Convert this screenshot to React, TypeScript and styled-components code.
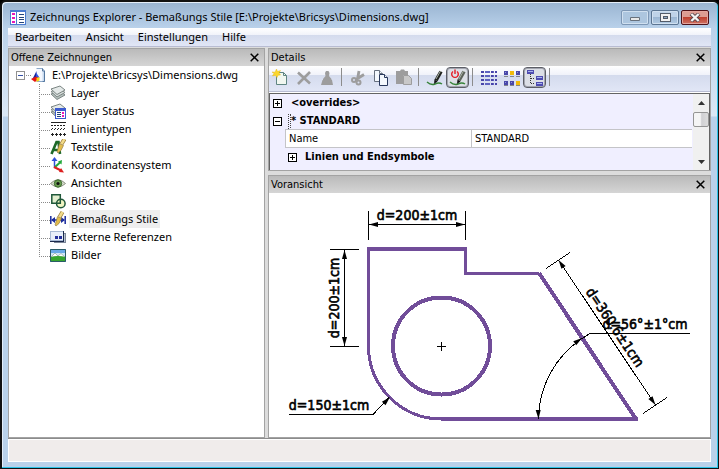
import React from "react";
import styled, { createGlobalStyle, css } from "styled-components";

const uiFont = `"Noto Sans", "Open Sans", sans-serif`;
const panelFont = `"DejaVu Sans Condensed", "DejaVu Sans", sans-serif`;

const GlobalStyle = createGlobalStyle`
  *, *::before, *::after { box-sizing: border-box; }
  body { margin: 0; background: #000; color: #000; font: 11px/18px ${uiFont}; }
  button, input { font: inherit; color: inherit; }
`;

const Window = styled.div`
  height: 100vh;
  min-height: 360px;
  display: flex;
  flex-direction: column;
  padding: 0 7px 6px 6px;
  border: 1px solid #111;
  border-width: 2px 1px 1px 2px;
  border-radius: 6px 6px 0 0;
  box-shadow: inset -1px -1px #2cc3e8, inset 1px 1px #e4eef9;
  background: linear-gradient(#99b4d1 0, #b9d1ea 26px, #dbe8f5 114px, #b9d1ea 115px);
`;

const TitleBar = styled.header`
  flex: 0 0 26px;
  display: flex;
  align-items: center;
  gap: 4px;
  padding: 4px 2px 0 2px;
`;

const Title = styled.h1`
  flex: 1;
  margin: 0;
  overflow: hidden;
  white-space: nowrap;
  font: 11px/18px ${uiFont};
`;

const Captions = styled.div`
  display: flex;
  gap: 2px;
`;

const CaptionButton = styled.button<{ $close?: boolean; $dim?: boolean }>`
  width: 28px;
  height: 15px;
  padding: 0;
  display: grid;
  place-items: center;
  border: 1px solid ${(p) => (p.$close ? "#4e1218" : p.$dim ? "#7d97b5" : "#5b7592")};
  border-radius: 2px;
  box-shadow: inset 0 0 0 1px ${(p) => (p.$close ? "#e3a49c" : "#d0e0f0")};
  background: ${(p) =>
    p.$close
      ? "linear-gradient(#dc9c92 45%, #bf4130 50%, #ce7263)"
      : p.$dim
        ? "#adc6df"
        : "linear-gradient(#bfd3e8 45%, #9cb7d3 50%, #b3cbe3)"};
`;

const MenuBar = styled.nav`
  flex: 0 0 19px;
  display: flex;
  gap: 14px;
  padding: 0 7px;
  border-bottom: 1px solid #b8bcd2;
  background: linear-gradient(#fff, #f1f3fa 38%, #d4dbed 40%, #e1e6f6);
`;

const MenuItem = styled.button`
  padding: 0;
  border: 0;
  background: none;
  line-height: 18px;
`;

const Workspace = styled.main`
  flex: 1;
  min-height: 0;
  display: grid;
  grid-template-columns: 257px minmax(0, 1fr);
  gap: 3px;
  padding-top: 1px;
  background: #dcdcdc;
  border-bottom: 1px solid #8c8c8c;
`;

const RightColumn = styled.div`
  display: flex;
  flex-direction: column;
  gap: 4px;
  min-height: 0;
`;

const Panel = styled.section<{ $grow?: boolean }>`
  display: flex;
  flex-direction: column;
  min-height: 0;
  border: 1px solid #a3a3a3;
  background: #fff;
  ${(p) => p.$grow && css`flex: 1;`}
`;

const PanelHeader = styled.div`
  flex: 0 0 17px;
  display: flex;
  align-items: center;
  justify-content: space-between;
  padding: 0 4px 0 2px;
  background: linear-gradient(#bababa, #d5d5d5);
`;

const PanelTitle = styled.h2`
  margin: 0;
  font: 11px/16px ${panelFont};
`;

const CloseButton = styled.button`
  width: 11px;
  height: 13px;
  padding: 0;
  display: grid;
  place-items: center;
  border: 0;
  background: none;
`;

const Tree = styled.ul`
  margin: 0;
  padding: 0 0 0 7px;
  list-style: none;
`;

const Branch = styled.ul`
  margin: 0 0 0 23px;
  padding: 0;
  list-style: none;
`;

const RootRow = styled.div`
  display: flex;
  align-items: center;
  height: 18px;
`;

const TreeLabel = styled.button<{ $selected?: boolean }>`
  height: 18px;
  margin-left: 3px;
  padding: 0 2px;
  border: 0;
  white-space: nowrap;
  background: ${(p) => (p.$selected ? "#eeeeee" : "none")};
`;

const Leaf = styled.li`
  display: flex;
  align-items: center;
  height: 18px;
  padding-left: 11px;
  background:
    repeating-linear-gradient(#8a8a8a 0 1px, transparent 1px 2px) 0 0 / 1px 100% no-repeat,
    repeating-linear-gradient(90deg, #8a8a8a 0 1px, transparent 1px 2px) 0 10px / 11px 1px no-repeat;

  &:last-child {
    background:
      repeating-linear-gradient(#8a8a8a 0 1px, transparent 1px 2px) 0 0 / 1px 10px no-repeat,
      repeating-linear-gradient(90deg, #8a8a8a 0 1px, transparent 1px 2px) 0 10px / 11px 1px no-repeat;
  }
`;

const Expander = styled.button<{ $soft?: boolean }>`
  flex: none;
  width: 9px;
  height: 9px;
  padding: 0;
  display: grid;
  place-items: center;
  border: 1px solid ${(p) => (p.$soft ? "#919191" : "#000")};
  background: #fff;
`;

const Dots = styled.span`
  width: 6px;
  height: 1px;
  background: repeating-linear-gradient(90deg, transparent 0 1px, #8a8a8a 1px 2px);
`;

const Icon = styled.svg`
  display: block;
  flex: none;
`;

const Toolbar = styled.div`
  flex: 0 0 26px;
  display: flex;
  align-items: flex-start;
  padding-top: 1px;
  border-bottom: 1px solid #b8bcd2;
  background: linear-gradient(#fff, #f1f3fa 34%, #d4dbed 36%, #e1e6f6);
`;

const ToolButton = styled.button<{ $on?: boolean }>`
  width: 23px;
  height: 21px;
  padding: 0;
  display: grid;
  place-items: center;
  border: 1px solid ${(p) => (p.$on ? "#5c5e66" : "transparent")};
  border-radius: 4px;
  box-shadow: ${(p) => (p.$on ? "inset 0 0 0 1px #a3a6b0" : "none")};
  background: ${(p) => (p.$on ? "#dcdfe6" : "none")};
`;

const Separator = styled.span`
  width: 1px;
  height: 18px;
  margin: 1px 4px 0 3px;
  background: #8c8c8c;
`;

const Properties = styled.div`
  display: flex;
  margin-top: 1px;
  height: 77px;
  border: 1px solid #646464;
  border-width: 1px 1px 0 1px;
  background: #f0efff;
  font: 11px/18px ${panelFont};
`;

const PropertyRows = styled.div`
  flex: 1;
  min-width: 0;
`;

const GroupRow = styled.div<{ $nested?: boolean }>`
  display: flex;
  align-items: center;
  height: 18px;
  padding-left: ${(p) => (p.$nested ? 18 : 3)}px;
  font-weight: bold;
`;

const GroupName = styled.span<{ $gap: number }>`
  display: flex;
  align-items: center;
  margin-left: ${(p) => p.$gap}px;
`;

const FieldRow = styled.label`
  display: grid;
  grid-template-columns: 46fr 55fr;
  height: 19px;
  margin: -1px 1px 0 15px;
  border: 1px solid #c4c4c8;
  border-right: 0;
  background: #fff;
  line-height: 17px;

  span { padding-left: 3px; }
  input {
    min-width: 0;
    padding: 0 0 0 3px;
    border: 0;
    border-left: 1px solid #c4c4c8;
    background: none;
    outline: 0;
  }
`;

const ScrollBar = styled.div`
  width: 16px;
  display: grid;
  grid-template-rows: 18px 15px 1fr 17px;
  background: #f0f0f0;
`;

const ScrollButton = styled.button`
  padding: 0;
  display: grid;
  place-items: center;
  border: 0;
  background: none;
`;

const Thumb = styled.div`
  border: 1px solid #959595;
  border-radius: 2px;
  background: linear-gradient(90deg, #f5f5f5 45%, #d0d0d3 55%, #dcdcdc);
`;

const Canvas = styled.svg`
  flex: 1;
  min-height: 0;
  width: 100%;
  display: block;
  text {
    font: 14px ${panelFont};
    fill: #000;
    stroke: #000;
    stroke-width: 0.6px;
    text-anchor: middle;
  }
`;

const StatusBar = styled.footer`
  flex: 0 0 23px;
  border: 1px solid #fff;
  background: #f0eceb;
`;

const CrossGlyph = () => (
  <Icon width="9" height="9" viewBox="0 0 9 9">
    <path d="M.7.7l7.6 7.6M8.3.7L.7 8.3" stroke="#000" strokeWidth="1.5" />
  </Icon>
);

const Sign = ({ plus, color = "#000" }: { plus?: boolean; color?: string }) => (
  <Icon width="7" height="7" shapeRendering="crispEdges">
    <path d={plus ? "M1 3.500h5M3.500 1v5" : "M1 3.500h5"} stroke={color} />
  </Icon>
);

const AppIcon = () => (
  <Icon width="16" height="15" shapeRendering="crispEdges">
    <path fill="#4a7bd0" d="M0 0h16v15H0z" />
    <path fill="#fff" d="M1 2h5v12H1zM7 2h8v12H7z" />
    <path fill="#e818b8" d="M2 3h3v2H2zM2 7h3v2H2zM2 11h3v2H2z" />
    <path fill="#24457c" d="M9 4h5v1H9zM9 7h5v1H9zM9 9h5v1H9zM9 12h5v1H9z" />
  </Icon>
);

const Drawing = () => (
  <Icon width="16" height="16">
    <path d="M5.500 1.500h6l2 2.500v10.500h-8" fill="#f4f8ff" stroke="#8ca8c8" />
    <path d="M11.500 1.500V4h2v10.500h-2" fill="#c8daf0" stroke="#54779f" />
    <path d="M5.500 4L1.500 12h4z" fill="#16259f" />
    <path d="M5 5.500v6l3.500-1z" fill="#3155df" />
    <path d="M0 12l5-2.500 3 2-4 3.500z" fill="#e51414" />
    <path d="M5.500 11l3-1v3.500l-3 1.500z" fill="#f5d517" />
  </Icon>
);

const Sheets = () => (
  <g stroke="#7b8583" strokeWidth="1">
    <path d="M1 9l9-3 5 4-8 4.500z" fill="#b7c2bf" />
    <path d="M1 6.500l9-3 5 4-8 4.500z" fill="#d6dddb" />
    <path d="M1 4l9-3 5 4-8 4.500z" fill="#e4e9e8" />
  </g>
);

const Layers = () => <Icon width="16" height="16"><Sheets /></Icon>;

const LayerState = () => (
  <Icon width="16" height="16">
    <Sheets />
    <g shapeRendering="crispEdges">
      <path fill="#3c5bd0" d="M5 5h11v11H5z" />
      <path fill="#fff" d="M6 8h9v7H6z" />
      <path fill="#e818b8" d="M12 9h2v2h-2zM12 12h2v2h-2z" />
      <path fill="#24457c" d="M7 9h4v1H7zM7 11h4v1H7zM7 13h4v1H7z" />
    </g>
  </Icon>
);

const LineTypes = () => (
  <Icon width="16" height="16" shapeRendering="crispEdges" stroke="#222">
    <path d="M1 1.500h15" />
    <path d="M1 4.500h15" strokeDasharray="2 1" />
    <path d="M1 8.500h15" strokeDasharray="1 2" />
    <path d="M2 7.500h14" strokeDasharray="1 2" />
    <path d="M1 13.500h3M5 13.500h3M9 13.500h3M13 13.500h3M2.500 12v3M6.500 12v3M10.500 12v3M14.500 12v3" />
  </Icon>
);

const Brush = () => (
  <g>
    <path d="M13.500 1L10.500 6" stroke="#9c7b36" strokeWidth="4" />
    <path d="M13.500 1L10.500 6" stroke="#f2dc8a" strokeWidth="2.500" />
    <path d="M8.500 5.500l4 2-2.500 5-3 2.500-1-1z" fill="#e2bc4c" stroke="#8c7440" strokeWidth=".6" />
  </g>
);

const TextStyle = () => (
  <Icon width="16" height="16">
    <path d="M1.500 15L6.500 3h2l1.500 12M4 11h6" fill="none" stroke="#1d6928" strokeWidth="2.600" />
    <g transform="translate(1 -1)"><Brush /></g>
  </Icon>
);

const Axes = () => (
  <Icon width="16" height="16">
    <path d="M4.500 11V3" stroke="#3050d8" strokeWidth="1.500" />
    <path d="M4.500 0l3 4h-6z" fill="#3050d8" />
    <path d="M5 10l5-4.500" stroke="#22a83a" strokeWidth="2" />
    <path d="M12 3l-.5 4.500-3.500-3z" fill="#22a83a" />
    <path d="M4 10l7 3.500" stroke="#dd2020" strokeWidth="2" />
    <path d="M14 15.500l-5-.5 2-4z" fill="#dd2020" />
  </Icon>
);

const Eye = () => (
  <Icon width="16" height="16">
    <path d="M.5 8.500Q8 1 15.500 8.500 8 15.500.5 8.500z" fill="#d8dfcf" stroke="#8e9285" />
    <circle cx="8" cy="8.500" r="3.700" fill="#6b9c52" stroke="#3a6b2d" />
    <circle cx="8" cy="8.500" r="1.600" fill="#111" />
  </Icon>
);

const Blocks = () => (
  <Icon width="16" height="16" stroke="#20583a" strokeWidth="1.500">
    <path d="M1.800 1.800h8.500v8.500H1.800z" fill="#e3efd0" />
    <circle cx="10.800" cy="10.500" r="4.300" fill="#eff3b8" fillOpacity=".85" />
    <path d="M6 10.300h4.300V6" fill="none" />
  </Icon>
);

const DimStyle = () => (
  <Icon width="16" height="16">
    <path d="M.8 5v8M15.200 5v8M2 9h12" stroke="#1b2c9c" strokeWidth="1.500" />
    <path d="M1 9l4-3v6zM15 9l-4-3v6z" fill="#1b2c9c" />
    <g transform="translate(-1 0)"><Brush /></g>
  </Icon>
);

const Xref = () => (
  <Icon width="16" height="16" shapeRendering="crispEdges">
    <path d="M4.500 4.500h11v9h-11z" fill="#b9c4d4" stroke="#7d8798" />
    <path d="M.5 2.500h13v9H.5z" fill="#e9effa" stroke="#a9bad4" />
    <path d="M0 12.500h13.500V2" fill="none" stroke="#1c2a4c" />
    <path fill="#25309a" d="M5 7h3v3H5zM9 7h3v3H9z" />
  </Icon>
);

const Picture = () => (
  <Icon width="16" height="16">
    <path fill="#69a9e8" d="M0 2h16v13H0z" />
    <path fill="#cfe6f8" d="M1 6h14v4H1z" />
    <path fill="#fff" stroke="#7f9a8a" strokeWidth=".6" d="M1 10l4-4 3 3 3-2.500 4 3.500z" />
    <path fill="#35a52f" d="M1 10q7-2 14 0v4H1z" />
    <path d="M.5 2.500h15v12H.5z" fill="none" stroke="#2b5c67" />
  </Icon>
);

const NewIcon = () => (
  <Icon width="17" height="17">
    <path d="M4.500 3.500h7l3 3v9h-10z" fill="#f1f7f0" stroke="#5f8582" />
    <path d="M11.500 3.500v3h3" fill="none" stroke="#5f8582" />
    <path d="M4.500 0l1 2.500 3-1-1.500 2.500L8.500 6 6 6.200 5 8.500 3.500 6.200.5 7l1.500-2.500L0 3l3 .2z" fill="#fbd72d" stroke="#e6b400" strokeWidth=".4" />
  </Icon>
);

const DeleteIcon = () => (
  <Icon width="16" height="16"><path d="M2 2.500l12 11M14 2L2 14" stroke="#9d9d9d" strokeWidth="2.600" /></Icon>
);

const PurgeIcon = () => (
  <Icon width="16" height="16"><path d="M7 1h2.500l1 2-.5 3 2.500 3v1H4V9l2.500-3L6 3zM3.500 10h9.500l1 5h-12z" fill="#9d9d9d" /></Icon>
);

const CutIcon = () => (
  <Icon width="16" height="16" fill="none" stroke="#9d9d9d" strokeWidth="2">
    <path d="M9 1L7.500 9M14 4.500L6 9.500" strokeWidth="2.800" />
    <circle cx="4" cy="10" r="2" /><circle cx="8.500" cy="12.500" r="2" />
  </Icon>
);

const CopyIcon = () => (
  <Icon width="16" height="16" fill="#f4f8fd" stroke="#67707e">
    <path d="M1.500.5h5l3 3v8h-8z" /><path d="M6.500.5v3h3" />
    <path d="M6.500 4.500h5l3 3v8h-8z" stroke="#28385c" /><path d="M11.500 4.500v3h3" stroke="#28385c" />
  </Icon>
);

const PasteIcon = () => (
  <Icon width="17" height="17">
    <path d="M1 2h4l1-1.500h3L10 2h3v4H8v9H1z" fill="#9d9d9d" />
    <path d="M8.500 6.500h5l3 3v6h-8z" fill="#c8c8c8" stroke="#9d9d9d" />
  </Icon>
);

const PenIcon = ({ power }: { power?: boolean }) => (
  <Icon width="18" height="17">
    <path d="M1 13q4 3.500 8 2 4-2 7 0" fill="none" stroke="#37833a" strokeWidth="1.500" />
    <path d="M10 11.500L15 2.500" stroke={power ? "#5d635b" : "#20231f"} strokeWidth="3.600" />
    <path d="M10 10l4.500-8" stroke="#a8b0a4" strokeWidth="1" />
    <path d="M8 15l.5-4.500 3 2z" fill="#111" />
    {power && (
      <path d="M4 2.500a3.300 3.300 0 1 0 4 0M6 .5v4.500" fill="none" stroke="#e51922" strokeWidth="1.400" />
    )}
  </Icon>
);

const ListIcon = () => (
  <Icon width="16" height="16" shapeRendering="crispEdges" strokeWidth="2">
    {[2, 6, 10, 14].map((y) => (
      <g key={y}>
        <path d={`M0 ${y}h3M10 ${y}h2M14 ${y}h2`} stroke="#4845a9" />
        <path d={`M4 ${y}h5M12 ${y}h1`} stroke="#5e62c0" />
      </g>
    ))}
  </Icon>
);

const LargeIcons = () => (
  <Icon width="16" height="16" shapeRendering="crispEdges">
    <path fill="#4a48a9" d="M0 1h4v4H0zM12 1h4v4h-4zM0 11h4v4H0zM6 11h4v4H6z" />
    <path fill="#8f97dc" d="M1 2h1v1H1zM13 2h1v1h-1zM1 12h1v1H1zM7 12h1v1H7z" />
    <path fill="#f1ba0b" d="M6 1h4v4H6zM12 11h4v4h-4z" />
    <path fill="#83868b" d="M0 6h4v1H0zM6 6h4v1H6zM12 6h4v1h-4zM0 16h4v-1H0zM6 16h4v-1H6zM12 16h4v-1h-4z" />
  </Icon>
);

const TreeIcon = () => (
  <Icon width="17" height="17" shapeRendering="crispEdges">
    <path d="M4.500 5v10M5 9.500h4M5 14.500h4" stroke="#333" strokeDasharray="1 1" />
    <path fill="#4f4cb1" d="M1 1h7v4H1zM10 7h7v4h-7zM10 13h7v4h-7z" />
    <path fill="#a8b4ed" d="M2 2h5v1H2zM11 8h5v1h-5zM11 14h5v1h-5z" />
  </Icon>
);

const FocusMark = () => (
  <Icon width="3" height="15" shapeRendering="crispEdges">
    <path d="M.5 0v15M2.500 1v14M0 .5h3" stroke="#444" strokeDasharray="1 1" />
  </Icon>
);

const leaves: [string, () => React.ReactElement][] = [
  ["Layer", Layers],
  ["Layer Status", LayerState],
  ["Linientypen", LineTypes],
  ["Textstile", TextStyle],
  ["Koordinatensystem", Axes],
  ["Ansichten", Eye],
  ["Blöcke", Blocks],
  ["Bemaßungs Stile", DimStyle],
  ["Externe Referenzen", Xref],
  ["Bilder", Picture],
];

const tools: ([string, React.ReactElement, boolean?] | null)[] = [
  ["Neu", <NewIcon />],
  ["Löschen", <DeleteIcon />],
  ["Bereinigen", <PurgeIcon />],
  null,
  ["Ausschneiden", <CutIcon />],
  ["Kopieren", <CopyIcon />],
  ["Einfügen", <PasteIcon />],
  null,
  ["Bearbeiten", <PenIcon />],
  ["Automatisch", <PenIcon power />, true],
  null,
  ["Liste", <ListIcon />],
  ["Symbole", <LargeIcons />],
  ["Baum", <TreeIcon />, true],
  null,
];

const Arrow = ({ x, y, angle }: { x: number; y: number; angle: number }) => (
  <path d="M0 0l-9-2.500v5z" transform={`translate(${x} ${y}) rotate(${angle})`} />
);

const Preview = () => (
  <Canvas viewBox="269 193 441 244" role="img" aria-label="Voransicht">
    <g fill="none" stroke="#714d99" shapeRendering="crispEdges">
      <path d="M441 419A73 73 0 0 1 368.500 346V249M465.500 249V273.500H539" strokeWidth="3" />
      <path d="M367 249H467M441 419H638M539 273L636 419" strokeWidth="4" />
      <circle cx="441.500" cy="346" r="48.500" strokeWidth="4" />
    </g>
    <g fill="none" stroke="#000" shapeRendering="crispEdges">
      <path d="M437 346.500h9M441.500 342v9" />
      <path d="M368.500 211v29M465.500 211v29M368 224.500h97" />
      <path d="M330 249.500h29M330 346.500h29M344.500 249v97" />
      <path d="M289 414.500h84l16-17" />
      <path d="M546 268.500l24-16M643 413.500l24-16M558.500 260l97 145" />
      <path d="M690 333.500H590l-8 5A98 98 0 0 0 538.500 419" />
    </g>
    <g fill="#000">
      <Arrow x={369} y={224.5} angle={180} />
      <Arrow x={465} y={224.5} angle={0} />
      <Arrow x={344.5} y={250} angle={-90} />
      <Arrow x={344.5} y={346} angle={90} />
      <Arrow x={390} y={397} angle={-46} />
      <Arrow x={558.5} y={260} angle={-124} />
      <Arrow x={655.5} y={405} angle={56} />
      <Arrow x={582} y={338} angle={-36} />
      <Arrow x={538.5} y={419} angle={88} />
    </g>
    <text x="417" y="220">d=200±1cm</text>
    <text transform="translate(339 298) rotate(-90)">d=200±1cm</text>
    <text x="329" y="410">d=150±1cm</text>
    <text transform="translate(611 330) rotate(56)">d=360.6±1cm</text>
    <text x="645" y="329">d=56°±1°cm</text>
  </Canvas>
);

const Header = ({ title }: { title: string }) => (
  <PanelHeader>
    <PanelTitle>{title}</PanelTitle>
    <CloseButton aria-label={`${title} schließen`}><CrossGlyph /></CloseButton>
  </PanelHeader>
);

export default function App() {
  return (
    <>
      <GlobalStyle />
      <Window>
        <TitleBar>
          <AppIcon />
          <Title>Zeichnungs Explorer - Bemaßungs Stile [E:\Projekte\Bricsys\Dimensions.dwg]</Title>
          <Captions>
            <CaptionButton $dim aria-label="Minimieren">
              <Icon width="12" height="9"><path d="M1.500 4.500h9v3h-9z" fill="#e8e8e8" stroke="#68717c" /></Icon>
            </CaptionButton>
            <CaptionButton aria-label="Maximieren">
              <Icon width="11" height="9" shapeRendering="crispEdges">
                <path d="M.5.5h10v8H.5z" fill="#f1f1f1" stroke="#535c69" />
                <path d="M3.500 3.500h4v2h-4z" fill="#8fa8c4" stroke="#535c69" />
              </Icon>
            </CaptionButton>
            <CaptionButton $close aria-label="Schließen">
              <Icon width="12" height="9">
                <path d="M2 .8l8 7.400M10 .8L2 8.200" stroke="#59434b" strokeWidth="4" />
                <path d="M2.300 1l7.400 7M9.700 1L2.300 8" stroke="#f3f3f3" strokeWidth="2.400" />
              </Icon>
            </CaptionButton>
          </Captions>
        </TitleBar>
        <MenuBar>
          {["Bearbeiten", "Ansicht", "Einstellungen", "Hilfe"].map((m) => <MenuItem key={m}>{m}</MenuItem>)}
        </MenuBar>
        <Workspace>
          <Panel>
            <Header title="Offene Zeichnungen" />
            <Tree>
              <li>
                <RootRow>
                  <Expander $soft aria-label="Reduzieren"><Sign color="#3451a8" /></Expander>
                  <Dots />
                  <Drawing />
                  <TreeLabel>E:\Projekte\Bricsys\Dimensions.dwg</TreeLabel>
                </RootRow>
                <Branch>
                  {leaves.map(([name, Glyph]) => (
                    <Leaf key={name}>
                      <Glyph />
                      <TreeLabel $selected={name === "Bemaßungs Stile"}>{name}</TreeLabel>
                    </Leaf>
                  ))}
                </Branch>
              </li>
            </Tree>
          </Panel>
          <RightColumn>
            <Panel>
              <Header title="Details" />
              <Toolbar>
                {tools.map((t, i) =>
                  t ? <ToolButton key={i} aria-label={t[0]} $on={t[2]}>{t[1]}</ToolButton> : <Separator key={i} />
                )}
              </Toolbar>
              <Properties>
                <PropertyRows>
                  <GroupRow>
                    <Expander aria-label="Erweitern"><Sign plus /></Expander>
                    <GroupName $gap={9}>&lt;overrides&gt;</GroupName>
                  </GroupRow>
                  <GroupRow>
                    <Expander aria-label="Reduzieren"><Sign /></Expander>
                    <GroupName $gap={6}>
                      <FocusMark />
                      * STANDARD
                    </GroupName>
                  </GroupRow>
                  <FieldRow>
                    <span>Name</span>
                    <input defaultValue="STANDARD" />
                  </FieldRow>
                  <GroupRow $nested>
                    <Expander aria-label="Erweitern"><Sign plus /></Expander>
                    <GroupName $gap={8}>Linien und Endsymbole</GroupName>
                  </GroupRow>
                </PropertyRows>
                <ScrollBar>
                  <ScrollButton aria-label="Nach oben">
                    <Icon width="7" height="4"><path d="M0 4l3.500-4L7 4z" fill="#333" /></Icon>
                  </ScrollButton>
                  <Thumb />
                  <span />
                  <ScrollButton aria-label="Nach unten">
                    <Icon width="7" height="4"><path d="M0 0l3.500 4L7 0z" fill="#333" /></Icon>
                  </ScrollButton>
                </ScrollBar>
              </Properties>
            </Panel>
            <Panel $grow>
              <Header title="Voransicht" />
              <Preview />
            </Panel>
          </RightColumn>
        </Workspace>
        <StatusBar />
      </Window>
    </>
  );
}
